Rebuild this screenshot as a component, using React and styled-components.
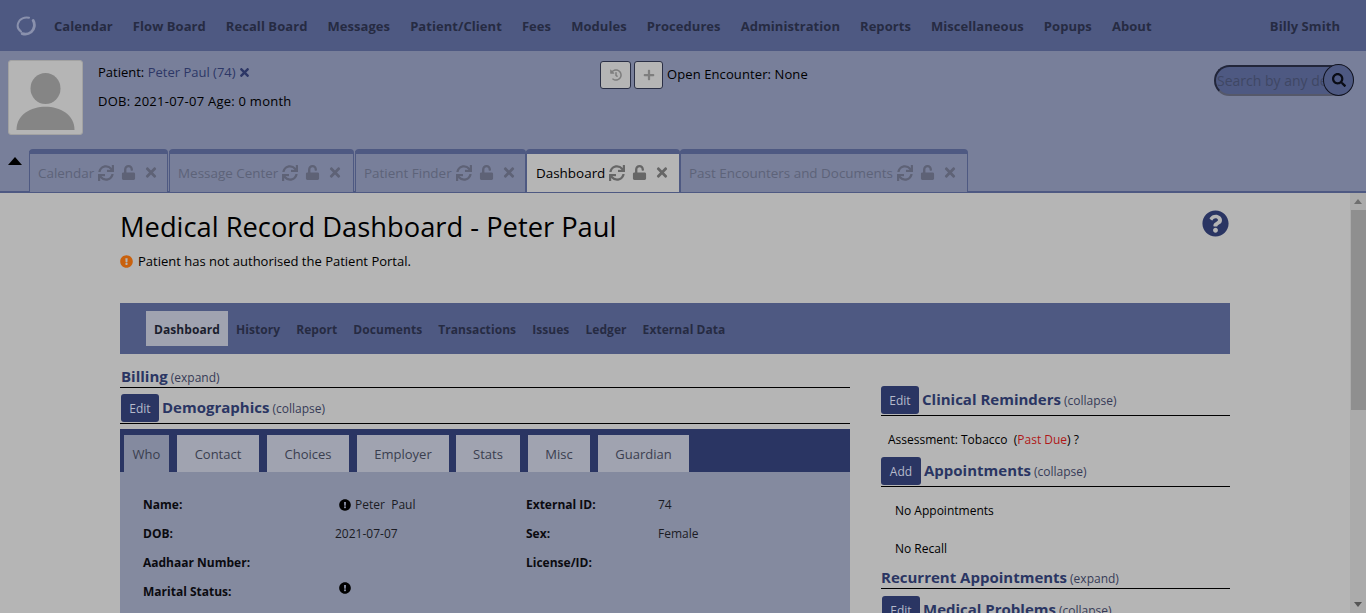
import React from "react";
import styled, { createGlobalStyle } from "styled-components";
import { FaSync, FaUnlock, FaTimes, FaHistory, FaPlus, FaSearch, FaQuestionCircle, FaExclamationCircle } from "react-icons/fa";

const Global = createGlobalStyle`
  html, body { margin: 0; height: 100%; overflow: hidden; }
  body { font-family: "Open Sans", "Liberation Sans", sans-serif; font-size: 13px; color: #000; background: #b5b5b5; }
  * { box-sizing: border-box; }
`;

const Page = styled.div`display: flex; flex-direction: column; width: 1366px; height: 613px; overflow: hidden;`;
const TopNav = styled.nav`flex: 0 0 51px; display: flex; align-items: center; background: #4e5982; padding: 0 26px 0 16px;`;
const Logo = styled.svg`width: 20px; height: 20px; margin-right: 18px;`;
const NavItem = styled.span`font-weight: 700; font-size: 13px; letter-spacing: .06px; color: #262b42; margin-right: 20px; white-space: nowrap;`;
const UserName = styled(NavItem)`margin: 0 0 0 auto;`;

const Header = styled.header`flex: 0 0 142px; display: flex; flex-direction: column; background: #787f9a; border-bottom: 2px solid #4e5982;`;
const HeaderTop = styled.div`display: flex; padding: 9px 0 0 8px; align-items: flex-start;`;
const Avatar = styled.div`width: 75px; height: 75px; background: #b5b5b5; border: 1px solid #a2a2a2; border-radius: 3px; overflow: hidden; margin-right: 15px;`;
const PatientInfo = styled.div`width: 502px; line-height: 18px; padding-top: 3px;`;
const PatientLine = styled.div`height: 29px; display: flex; align-items: flex-start; white-space: pre; letter-spacing: ${p => p.$track || 0}px;`;
const PatientLink = styled.span`color: #2d3766;`;
const CloseX = styled(FaTimes)`color: #2d3766; width: 11px; height: 13px; margin: 3px 0 0 3px;`;
const Encounter = styled.div`display: flex; align-items: center; gap: 3px; padding-top: 1px;`;
const SquareBtn = styled.button`width: ${p => p.$w}px; height: 28px; display: grid; place-items: center; padding: 0; background: #b5b5b5; color: #7e7e7e; border: 1px solid #2a2f45; border-radius: 3px; svg { width: 12px; height: 12px; }`;
const EncounterText = styled.span`margin-left: 1px; margin-top: -3px; letter-spacing: .1px;`;
const SearchWrap = styled.div`position: relative; margin: 5px 20px 0 auto;`;
const SearchBox = styled.div`width: 132px; height: 31px; background: #4e5982; border: 2px solid #22263a; border-bottom-color: #55586a; border-right: 0; border-radius: 16px; color: #3f4764; font-size: 14px; line-height: 28px; padding-left: 1px; white-space: nowrap; overflow: hidden;`;
const SearchBtn = styled.div`position: absolute; right: -8px; top: -1px; width: 31px; height: 32px; border-radius: 50%; background: #4e5982; border: 1.5px solid #11131f; display: grid; place-items: center; color: #0a0c16; svg { width: 14px; height: 14px; }`;

const TabStrip = styled.div`margin-top: auto; display: flex; align-items: flex-end; height: 42px; padding-left: 8px; margin-bottom: -1px;`;
const Caret = styled.div`width: 21px; align-self: flex-start; padding-top: 7px; &::before { content: ""; display: block; width: 0; height: 0; border-left: 7px solid transparent; border-right: 7px solid transparent; border-bottom: 8px solid #000; }`;
const Tab = styled.div`
  height: 43px; display: flex; align-items: center; gap: 4px; padding: 0 0 1px ${p => p.$active ? 9 : 8}px; width: ${p => p.$w}px; margin-right: ${p => p.$gap}px;
  border-top: 5px solid #4e5982; border-left: 1px solid #4e5982; border-right: 1px solid #4e5982; border-radius: 4px 4px 0 0;
  background: ${p => p.$active ? "#b5b5b5" : "#787f9a"}; color: ${p => p.$active ? "#000" : "#5d6379"}; font-size: 13.45px; white-space: nowrap; flex: none;
  svg { color: ${p => p.$active ? "#666" : "#5e6276"}; flex: none; }
`;
const TabIcons = styled.span`display: inline-flex; align-items: center; gap: 7px; svg:nth-child(1) { width: 16px; height: 16px; } svg:nth-child(2) { width: 15px; height: 15px; } svg:nth-child(3) { width: 12px; height: 15px; margin-left: 2px; }`;

const Body = styled.div`flex: 1; display: flex; min-height: 0;`;
const Content = styled.main`flex: 1; overflow: hidden; padding: 0 120px;`;
const TitleRow = styled.div`display: flex; justify-content: space-between; height: 51px; padding-top: 16px;`;
const Title = styled.h1`margin: 0; font-size: 27.3px; font-weight: 500; line-height: 36px; color: #000;`;
const HelpIcon = styled(FaQuestionCircle)`width: 27px; height: 27px; color: #2a3563; margin: 1px 1px 0 0;`;
const Notice = styled.div`display: flex; align-items: center; gap: 5px; height: 20px; margin-top: 7px; svg { width: 13px; height: 13px; color: #c9610d; }`;
const SubNav = styled.div`height: 51px; margin-top: 32px; background: #4e5982; display: flex; align-items: flex-start; padding: 8px 0 0 26px;`;
const SubItem = styled.span`height: 35px; line-height: 37px; padding: 0 8px; font-size: 12px; letter-spacing: .07px; font-weight: 700; color: ${p => p.$active ? "#1b1e2e" : "#262b42"}; background: ${p => p.$active ? "#a0a3b0" : "transparent"};`;
const Columns = styled.div`display: flex; justify-content: space-between; align-items: flex-start;`;
const Left = styled.div`width: 730px;`;
const Right = styled.div`width: 349px; padding-top: 32px;`;
const SectionHead = styled.div`display: flex; align-items: flex-end; gap: 3px; height: ${p => p.$h || 30}px; padding-left: ${p => p.$pl || 0}px; border-bottom: 1px solid #000; white-space: pre;`;
const ActionBtn = styled.span`display: inline-grid; place-items: center; flex: none; width: ${p => p.$w || 38}px; height: 28px; margin-bottom: 1px; background: #2a3563; color: #b5bacb; border-radius: 3px; font-size: 12px;`;
const SectionLabel = styled.span`display: inline-flex; align-items: baseline; gap: 3px; line-height: 20px; margin-bottom: ${p => p.$raised ? 4 : -1}px;`;
const SectionTitle = styled.span`font-size: 15px; font-weight: 700; color: #2a3563;`;
const SectionHint = styled.span`font-size: 12px; color: #363b57;`;
const TabBar = styled.div`margin-top: 5px; height: 43px; background: #2a3563; display: flex; align-items: flex-end; padding-left: 4px;`;
const DemoTab = styled.span`height: 37px; width: ${p => p.$w}px; margin-right: ${p => p.$mr}px; display: grid; place-items: center; background: ${p => p.$active ? "#848a9f" : "#a0a3b0"}; color: #3a3e4f; flex: none;`;
const DemoPanel = styled.div`background: #848a9f; padding: 18px 0 0 23px; height: 200px; display: grid; grid-template-columns: 192px 191px 132px 1fr; grid-auto-rows: 29px; align-items: center; font-size: 12px;`;
const FieldLabel = styled.span`font-weight: 700; color: #0b0b10;`;
const FieldValue = styled.span`display: flex; align-items: center; gap: 1px; color: #1b1c24; white-space: pre; svg { width: 12px; height: 12px; color: #000; margin-left: ${p => p.$indent || 0}px; margin-top: ${p => p.$up || 0}px; }`;
const Reminder = styled.div`font-size: 12px; padding: 16px 0 0 7px; height: 41px; line-height: 16px; white-space: pre;`;
const Overdue = styled.span`color: #b01818;`;
const PlainRow = styled.div`font-size: 12px; padding-left: 14px; line-height: 16px; margin-top: ${p => p.$mt}px;`;

const ScrollBar = styled.div`flex: 0 0 16px; position: relative; background: #ababab; display: flex; flex-direction: column; align-items: center;`;
const ArrowUp = styled.div`margin-top: 6px; border-left: 4px solid transparent; border-right: 4px solid transparent; border-bottom: 5px solid #6e6e6e;`;
const Thumb = styled.div`width: 15px; height: 200px; background: #8f8f8f; margin-top: 6px;`;
const ArrowDown = styled.div`margin-top: auto; margin-bottom: 6px; border-left: 4px solid transparent; border-right: 4px solid transparent; border-top: 5px solid #555;`;

const nav = ["Calendar","Flow Board","Recall Board","Messages","Patient/Client","Fees","Modules","Procedures","Administration","Reports","Miscellaneous","Popups","About"];
const tabs = [["Calendar",139,1],["Message Center",185,1],["Patient Finder",171,0],["Dashboard",154,0,true],["Past Encounters and Documents",288,0]];
const sub = ["Dashboard","History","Report","Documents","Transactions","Issues","Ledger","External Data"];
const demo = [["Who",45,8,true],["Contact",82,8],["Choices",82,8],["Employer",92,7],["Stats",64,8],["Misc",62,8],["Guardian",91,0]];

export default function App() {
  return (
    <Page>
      <Global />
      <TopNav>
        <Logo viewBox="0 0 20 20" fill="none" stroke="#8a91ad" strokeLinecap="round">
          <path d="M13 1.8C9 .6 3.5 2.6 2 7.5 1 11 2.6 14 5 15.6" strokeWidth="2" />
          <path d="M17.2 4.5c2 3.5 1.5 8.5-2 11.5-2.5 2-6 2.6-9 1.6" strokeWidth="2.8" />
        </Logo>
        {nav.map(n => <NavItem key={n}>{n}</NavItem>)}
        <UserName>Billy Smith</UserName>
      </TopNav>
      <Header>
        <HeaderTop>
          <Avatar>
            <svg viewBox="0 0 73 73" width="73" height="73">
              <ellipse cx="36.5" cy="27.5" rx="15" ry="15.5" fill="#858585" />
              <path d="M7.5 69C7.5 38 65.5 38 65.5 69z" fill="#858585" />
            </svg>
          </Avatar>
          <PatientInfo>
            <PatientLine>Patient: <PatientLink>Peter Paul (74)</PatientLink><CloseX /></PatientLine>
            <PatientLine $track={0.25}>DOB: 2021-07-07 Age: 0 month</PatientLine>
          </PatientInfo>
          <Encounter>
            <SquareBtn $w={31}><FaHistory /></SquareBtn>
            <SquareBtn $w={29}><FaPlus /></SquareBtn>
            <EncounterText>Open Encounter: None</EncounterText>
          </Encounter>
          <SearchWrap>
            <SearchBox>Search by any demographics</SearchBox>
            <SearchBtn><FaSearch /></SearchBtn>
          </SearchWrap>
        </HeaderTop>
        <TabStrip>
          <Caret />
          {tabs.map(([t, w, g, a]) => (
            <Tab key={t} $w={w} $gap={g} $active={a}>
              {t}
              <TabIcons><FaSync /><FaUnlock /><FaTimes /></TabIcons>
            </Tab>
          ))}
        </TabStrip>
      </Header>
      <Body>
        <Content>
          <TitleRow>
            <Title>Medical Record Dashboard - Peter Paul</Title>
            <HelpIcon />
          </TitleRow>
          <Notice><FaExclamationCircle />Patient has not authorised the Patient Portal.</Notice>
          <SubNav>{sub.map((s, i) => <SubItem key={s} $active={i === 0}>{s}</SubItem>)}</SubNav>
          <Columns>
            <Left>
              <SectionHead $h={34} $pl={1}><SectionLabel><SectionTitle>Billing</SectionTitle><SectionHint>(expand)</SectionHint></SectionLabel></SectionHead>
              <SectionHead $h={36} $pl={1}><ActionBtn>Edit</ActionBtn><SectionLabel $raised><SectionTitle>Demographics</SectionTitle><SectionHint>(collapse)</SectionHint></SectionLabel></SectionHead>
              <TabBar>{demo.map(([t, w, m, a]) => <DemoTab key={t} $w={w} $mr={m} $active={a}>{t}</DemoTab>)}</TabBar>
              <DemoPanel>
                <FieldLabel>Name:</FieldLabel><FieldValue $indent={4}><FaExclamationCircle /> Peter  Paul</FieldValue><FieldLabel>External ID:</FieldLabel><FieldValue>74</FieldValue>
                <FieldLabel>DOB:</FieldLabel><FieldValue>2021-07-07</FieldValue><FieldLabel>Sex:</FieldLabel><FieldValue>Female</FieldValue>
                <FieldLabel>Aadhaar Number:</FieldLabel><FieldValue /><FieldLabel>License/ID:</FieldLabel><FieldValue />
                <FieldLabel>Marital Status:</FieldLabel><FieldValue $indent={4} $up={-8}><FaExclamationCircle /></FieldValue>
              </DemoPanel>
            </Left>
            <Right>
              <SectionHead $h={30}><ActionBtn>Edit</ActionBtn><SectionLabel $raised><SectionTitle>Clinical Reminders</SectionTitle><SectionHint>(collapse)</SectionHint></SectionLabel></SectionHead>
              <Reminder>Assessment: Tobacco  (<Overdue>Past Due</Overdue>) ?</Reminder>
              <SectionHead $h={30}><ActionBtn $w={40}>Add</ActionBtn><SectionLabel $raised><SectionTitle>Appointments</SectionTitle><SectionHint>(collapse)</SectionHint></SectionLabel></SectionHead>
              <PlainRow $mt={16}>No Appointments</PlainRow>
              <PlainRow $mt={22}>No Recall</PlainRow>
              <SectionHead $h={32}><SectionLabel><SectionTitle>Recurrent Appointments</SectionTitle><SectionHint>(expand)</SectionHint></SectionLabel></SectionHead>
              <SectionHead $h={37} $pl={1}><ActionBtn>Edit</ActionBtn><SectionLabel $raised><SectionTitle>Medical Problems</SectionTitle><SectionHint>(collapse)</SectionHint></SectionLabel></SectionHead>
            </Right>
          </Columns>
        </Content>
        <ScrollBar><ArrowUp /><Thumb /><ArrowDown /></ScrollBar>
      </Body>
    </Page>
  );
}
